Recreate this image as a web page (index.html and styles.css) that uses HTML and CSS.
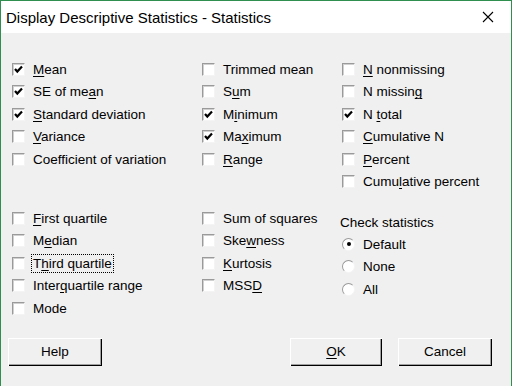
FILE: index.html
```html
<!doctype html>
<html>

<head>
	<title>Display Descriptive Statistics - Statistics</title>
	<link rel="stylesheet" href="styles.css">
</head>

<body>
	<div class='window'>
		<div class='titlebar'>
			<span class='title'>Display Descriptive Statistics - Statistics</span>
			<span class='close'>
				<svg width='12' height='12' viewBox='0 0 12 12'><path d='M1 1 L11 11 M11 1 L1 11' stroke='#000' stroke-width='1.1' fill='none'/></svg>
			</span>
		</div>

		<div class='stats'>
			<div class='group'>
				<div class='col'>
					<label class='opt'><span class='box on'></span><span><u>M</u>ean</span></label>
					<label class='opt'><span class='box on'></span><span>SE of me<u>a</u>n</span></label>
					<label class='opt'><span class='box on'></span><span><u>S</u>tandard deviation</span></label>
					<label class='opt'><span class='box'></span><span><u>V</u>ariance</span></label>
					<label class='opt'><span class='box'></span><span>Coefficient of variation</span></label>
				</div>
				<div class='col'>
					<label class='opt'><span class='box'></span><span>Trimmed mean</span></label>
					<label class='opt'><span class='box'></span><span>S<u>u</u>m</span></label>
					<label class='opt'><span class='box on'></span><span>M<u>i</u>nimum</span></label>
					<label class='opt'><span class='box on'></span><span>Ma<u>x</u>imum</span></label>
					<label class='opt'><span class='box'></span><span><u>R</u>ange</span></label>
				</div>
				<div class='col'>
					<label class='opt'><span class='box'></span><span><u>N</u> nonmissing</span></label>
					<label class='opt'><span class='box'></span><span>N missin<u>g</u></span></label>
					<label class='opt'><span class='box on'></span><span>N <u>t</u>otal</span></label>
					<label class='opt'><span class='box'></span><span><u>C</u>umulative N</span></label>
					<label class='opt'><span class='box'></span><span><u>P</u>ercent</span></label>
					<label class='opt'><span class='box'></span><span>Cumu<u>l</u>ative percent</span></label>
				</div>
			</div>

			<div class='group second'>
				<div class='col'>
					<label class='opt'><span class='box'></span><span><u>F</u>irst quartile</span></label>
					<label class='opt'><span class='box'></span><span>M<u>e</u>dian</span></label>
					<label class='opt'><span class='box'></span><span class='focus'>T<u>h</u>ird quartile</span></label>
					<label class='opt'><span class='box'></span><span>Inter<u>q</u>uartile range</span></label>
					<label class='opt'><span class='box'></span><span>Mode</span></label>
				</div>
				<div class='col'>
					<label class='opt'><span class='box'></span><span>Sum of squares</span></label>
					<label class='opt'><span class='box'></span><span>Ske<u>w</u>ness</span></label>
					<label class='opt'><span class='box'></span><span><u>K</u>urtosis</span></label>
					<label class='opt'><span class='box'></span><span>MSS<u>D</u></span></label>
				</div>
				<div class='col'>
					<div class='group-label'>Check statistics</div>
					<label class='opt'><span class='radio on'></span><span>Default</span></label>
					<label class='opt'><span class='radio'></span><span>None</span></label>
					<label class='opt'><span class='radio'></span><span>All</span></label>
				</div>
			</div>
		</div>

		<div class='buttons'>
			<button class='btn help'>Help</button>
			<div class='right'>
				<button class='btn ok'><u>O</u>K</button>
				<button class='btn cancel'>Cancel</button>
			</div>
		</div>
	</div>
</body>

</html>
```

FILE: styles.css
```css
html, body {
	margin: 0;
	padding: 0;
	width: 100%;
	height: 100%;
	font-family: 'Liberation Sans', Arial, sans-serif;
	font-size: 13.5px;
	color: #000;
}

.window {
	box-sizing: border-box;
	width: 512px;
	height: 386px;
	border: 1px solid #2f8f4e;
	border-bottom: none;
	background-color: #f0f0f0;
	display: flex;
	flex-direction: column;
}

.titlebar {
	height: 32px;
	flex-shrink: 0;
	background-color: #fff;
	display: flex;
	align-items: center;
	justify-content: space-between;
	padding-left: 5px;
}
.title {
	font-size: 15px;
	color: #000;
}
.close {
	width: 46px;
	height: 32px;
	display: flex;
	align-items: center;
	justify-content: center;
}

.stats {
	padding: 25px 0 0 11px;
}
.group {
	display: grid;
	grid-template-columns: 190px 140px 1fr;
}
.group.second {
	margin-top: 14px;
}
.col {
	display: flex;
	flex-direction: column;
}

.opt {
	height: 22.5px;
	display: flex;
	align-items: center;
	white-space: nowrap;
}
.opt u {
	text-decoration-thickness: 1px;
	text-underline-offset: 2px;
}

.box {
	box-sizing: border-box;
	width: 13px;
	height: 13px;
	margin-right: 8px;
	background-color: #fff;
	border: 1px solid;
	border-color: #9a9a9a #f4f4f4 #f4f4f4 #9a9a9a;
	box-shadow: inset 1px 1px 0 #d0d0d0;
	flex-shrink: 0;
}
.box.on {
	background-image: url("data:image/svg+xml;utf8,<svg xmlns='http://www.w3.org/2000/svg' width='11' height='11'><polyline points='2,5 4.3,7.6 9,2.5' fill='none' stroke='black' stroke-width='2.2'/></svg>");
	background-repeat: no-repeat;
	background-position: 0 0;
}

.radio {
	box-sizing: border-box;
	width: 13px;
	height: 13px;
	margin-right: 8px;
	border-radius: 50%;
	background-color: #fff;
	border: 1px solid;
	border-color: #9a9a9a #f4f4f4 #f4f4f4 #9a9a9a;
	display: flex;
	align-items: center;
	justify-content: center;
	flex-shrink: 0;
}
.radio.on::after {
	content: '';
	width: 4px;
	height: 4px;
	border-radius: 50%;
	background-color: #000;
}

.group-label {
	height: 20px;
	line-height: 20px;
	margin-top: 6px;
	margin-left: -2px;
}

.focus {
	outline: 1px dotted #000;
	outline-offset: 1px;
}

.buttons {
	display: flex;
	justify-content: space-between;
	padding: 0 19px 0 7px;
	margin-top: 18px;
}
.right {
	display: flex;
	gap: 16px;
}
.btn {
	height: 28px;
	border: none;
	background-color: #f0f0f0;
	font-family: 'Liberation Sans', Arial, sans-serif;
	font-size: 13.5px;
	color: #000;
	padding: 0;
	box-shadow: inset 1px 1px 0 #fff, inset -1px -1px 0 #000, inset -2px -2px 0 #a0a0a0;
}
.btn.help {
	width: 94px;
}
.btn.ok {
	width: 92px;
}
.btn.cancel {
	width: 94px;
}
.btn u {
	text-underline-offset: 2px;
}
```
